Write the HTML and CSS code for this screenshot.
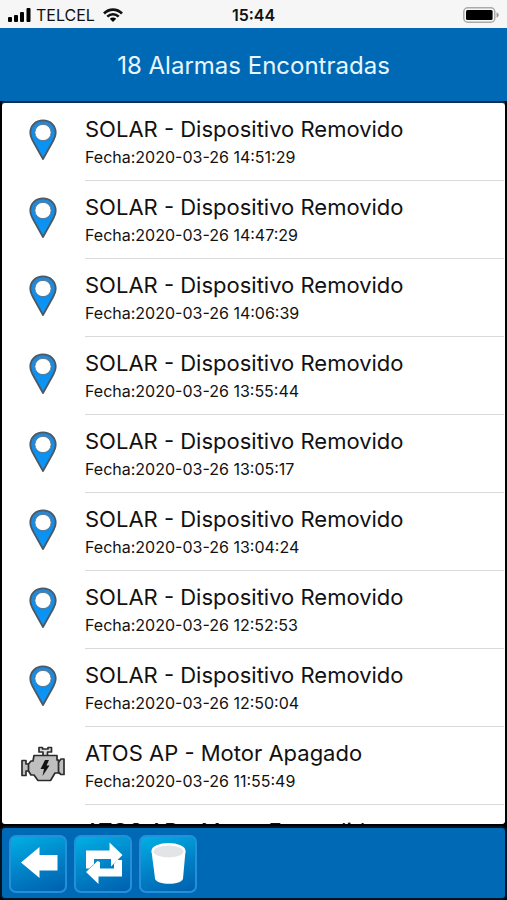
FILE: index.html
```html
<!DOCTYPE html>
<html lang="es">
<head>
<meta charset="utf-8">
<meta name="viewport" content="width=device-width, initial-scale=1">
<title>Alarmas</title>
<link rel="stylesheet" href="styles.css">
</head>
<body>
<svg class="defs" aria-hidden="true">
  <defs>
    <linearGradient id="pin-fill" x1="0" y1="0" x2="0" y2="1">
      <stop offset="0" stop-color="#2b86d0"/>
      <stop offset="0.5" stop-color="#0c90f0"/>
      <stop offset="1" stop-color="#0a98fb"/>
    </linearGradient>
    <symbol id="pin" viewBox="0 0 28 42">
      <path d="M14 1.300C6.700 1.300 1.300 6.600 1.300 13.500C1.300 17 2.800 20 4.500 23L14 40L23.500 23C25.200 20 26.700 17 26.700 13.500C26.700 6.600 21.300 1.300 14 1.300Z" fill="url(#pin-fill)" stroke="#4a5964" stroke-width="1.800" stroke-linejoin="round"/>
      <circle cx="14" cy="13.500" r="8.200" fill="#fff" stroke="#56768f" stroke-width="1"/>
    </symbol>
    <symbol id="engine" viewBox="0 0 44 36">
      <g fill="#bfbfbf" stroke="#2c2c2c" stroke-width="1.700" stroke-linejoin="round">
        <path d="M22 10V6H18V1.500H21.500V3H27V1.500H30.500V6H26.500V10Z" fill="#ddd"/>
        <path d="M1 14.500H5V18H8.500V25H5V29.500H1Z"/>
        <path d="M36 18L40 13H43V28.500H40L36 25Z"/>
        <path d="M13 9.500H36V14H37.500V27H34L29.500 34.500H17L13 29H10L7.500 25V18L10 15H12Z"/>
      </g>
      <path d="M24 14H28L25.500 19.500H28.500L21.500 30L23 23H19.500Z" fill="#111"/>
    </symbol>
  </defs>
</svg>
<div class="app">
  <div class="status">
    <div class="carrier">
      <svg class="signal" viewBox="0 0 23 14" aria-hidden="true"><rect x="0" y="9" width="4" height="5" rx="1"/><rect x="6" y="7" width="4" height="7" rx="1"/><rect x="12" y="4" width="4" height="10" rx="1"/><rect x="18.500" y="0" width="4" height="14" rx="1"/></svg>
      <span>TELCEL</span>
      <svg class="wifi" viewBox="0 0 20 14" aria-hidden="true"><path d="M1 5.500C6 .3 14 .3 19 5.500M4.300 8.700C7.500 5.500 12.500 5.500 15.700 8.700" fill="none" stroke="#111" stroke-width="2.600"/><path d="M6.800 10.800C8.600 9 11.400 9 13.200 10.800L10 14Z"/></svg>
    </div>
    <time class="clock">15:44</time>
    <svg class="battery" viewBox="0 0 36 16" aria-hidden="true"><rect x=".8" y=".8" width="31" height="14.400" rx="4" fill="#f6f6f6" stroke="#aaa" stroke-width="1.500"/><rect x="3" y="3" width="26.600" height="10" rx="1.500"/><path d="M33.500 5.500C36.500 6 36.500 10 33.500 10.500Z" fill="#999"/></svg>
  </div>
  <header class="title-bar"><h1>18 Alarmas Encontradas</h1></header>
  <main class="panel">
    <ul class="alarms">
      <li class="alarm"><svg class="icon pin" aria-hidden="true"><use href="#pin"/></svg><div class="info"><h2>SOLAR - Dispositivo Removido</h2><p>Fecha:2020-03-26 14:51:29</p></div></li>
      <li class="alarm"><svg class="icon pin" aria-hidden="true"><use href="#pin"/></svg><div class="info"><h2>SOLAR - Dispositivo Removido</h2><p>Fecha:2020-03-26 14:47:29</p></div></li>
      <li class="alarm"><svg class="icon pin" aria-hidden="true"><use href="#pin"/></svg><div class="info"><h2>SOLAR - Dispositivo Removido</h2><p>Fecha:2020-03-26 14:06:39</p></div></li>
      <li class="alarm"><svg class="icon pin" aria-hidden="true"><use href="#pin"/></svg><div class="info"><h2>SOLAR - Dispositivo Removido</h2><p>Fecha:2020-03-26 13:55:44</p></div></li>
      <li class="alarm"><svg class="icon pin" aria-hidden="true"><use href="#pin"/></svg><div class="info"><h2>SOLAR - Dispositivo Removido</h2><p>Fecha:2020-03-26 13:05:17</p></div></li>
      <li class="alarm"><svg class="icon pin" aria-hidden="true"><use href="#pin"/></svg><div class="info"><h2>SOLAR - Dispositivo Removido</h2><p>Fecha:2020-03-26 13:04:24</p></div></li>
      <li class="alarm"><svg class="icon pin" aria-hidden="true"><use href="#pin"/></svg><div class="info"><h2>SOLAR - Dispositivo Removido</h2><p>Fecha:2020-03-26 12:52:53</p></div></li>
      <li class="alarm"><svg class="icon pin" aria-hidden="true"><use href="#pin"/></svg><div class="info"><h2>SOLAR - Dispositivo Removido</h2><p>Fecha:2020-03-26 12:50:04</p></div></li>
      <li class="alarm"><svg class="icon engine" aria-hidden="true"><use href="#engine"/></svg><div class="info"><h2>ATOS AP - Motor Apagado</h2><p>Fecha:2020-03-26 11:55:49</p></div></li>
      <li class="alarm"><div class="icon"></div><div class="info"><h2>ATOS AP - Motor Encendido</h2></div></li>
    </ul>
  </main>
  <nav class="toolbar">
    <button class="tool" type="button" aria-label="Volver"><svg viewBox="0 0 54 54" aria-hidden="true"><path d="M10 25.500L28.500 10V18H46.500V33.500H28.500V41Z"/></svg></button>
    <button class="tool" type="button" aria-label="Actualizar"><svg viewBox="0 0 54 54" aria-hidden="true"><path d="M10 31.500V13.500H33.500V5.500L46.500 18L35 29.500V22H18V27L13 31.500Z"/><path d="M46 23V39.500H22.500V47L10 35L21.500 24L24 25V31.500H38V27L41 23Z"/></svg></button>
    <button class="tool" type="button" aria-label="Eliminar"><svg viewBox="0 0 54 54" aria-hidden="true"><path d="M10.500 14L14 41.500C15 48.500 41 48.500 42 41.500L44.500 14Z"/><ellipse cx="27.500" cy="14" rx="17" ry="8"/><ellipse cx="27.500" cy="14.500" rx="15" ry="6" fill="#e3e4e6"/></svg></button>
  </nav>
</div>
</body>
</html>
```
FILE: styles.css
```css
* {
  box-sizing: border-box;
}

body,
h1,
h2,
p,
ul {
  margin: 0;
  padding: 0;
  font-weight: 400;
}

body {
  font-family: Inter, "Liberation Sans", sans-serif;
  color: #111;
  background: #000;
}

.defs {
  position: absolute;
  width: 0;
  height: 0;
}

.app {
  display: flex;
  flex-direction: column;
  height: 100vh;
  overflow: hidden;
}

.status {
  display: grid;
  grid-template-columns: 1fr auto 1fr;
  align-items: center;
  height: 28px;
  padding: 2px 8px 0;
  background: #f6f6f6;
  font-size: 16px;
  line-height: 20px;
}

.carrier {
  display: flex;
  align-items: center;
  gap: 5px;
}

.signal {
  width: 23px;
  height: 14px;
}

.wifi {
  width: 20px;
  height: 14px;
  margin-left: 3px;
}

.clock {
  font-weight: 600;
}

.battery {
  width: 36px;
  height: 16px;
  justify-self: end;
}

.title-bar {
  display: flex;
  align-items: center;
  justify-content: center;
  height: 73px;
  padding-top: 2px;
  flex: none;
  background: #0069b5;
  color: #e8f6ff;
}

.title-bar h1 {
  font-size: 24px;
  line-height: 30px;
}

.panel {
  flex: 1;
  min-height: 0;
  padding-right: 1px;
  overflow: hidden;
  border: 2px solid #000;
  border-top-color: #062f50;
  border-radius: 5px;
  background: #fff;
}

.alarms {
  list-style: none;
}

.alarm {
  display: flex;
  height: 78px;
}

.icon {
  flex: none;
  width: 44px;
  height: 42px;
  margin: 16px 20px 0 19px;
}

.icon.engine {
  height: 36px;
  margin-top: 19px;
}

.info {
  flex: 1;
  padding-top: 11px;
  border-bottom: 1px solid #d9d9d9;
}

.info h2 {
  font-size: 22px;
  line-height: 30px;
}

.info p {
  font-size: 16px;
  line-height: 26px;
}

.toolbar {
  display: flex;
  gap: 7px;
  flex: none;
  height: 74px;
  padding: 7px;
  border: 2px solid #001320;
  border-radius: 5px;
  background: #0069b5;
}

.tool {
  width: 58px;
  height: 58px;
  padding: 0;
  border: 2px solid #2490da;
  border-radius: 7px;
  background: linear-gradient(160deg, #00b0e4, #0080c6 55%, #0060ae);
}

.tool svg {
  display: block;
  width: 100%;
  height: 100%;
  fill: #fff;
}
```
